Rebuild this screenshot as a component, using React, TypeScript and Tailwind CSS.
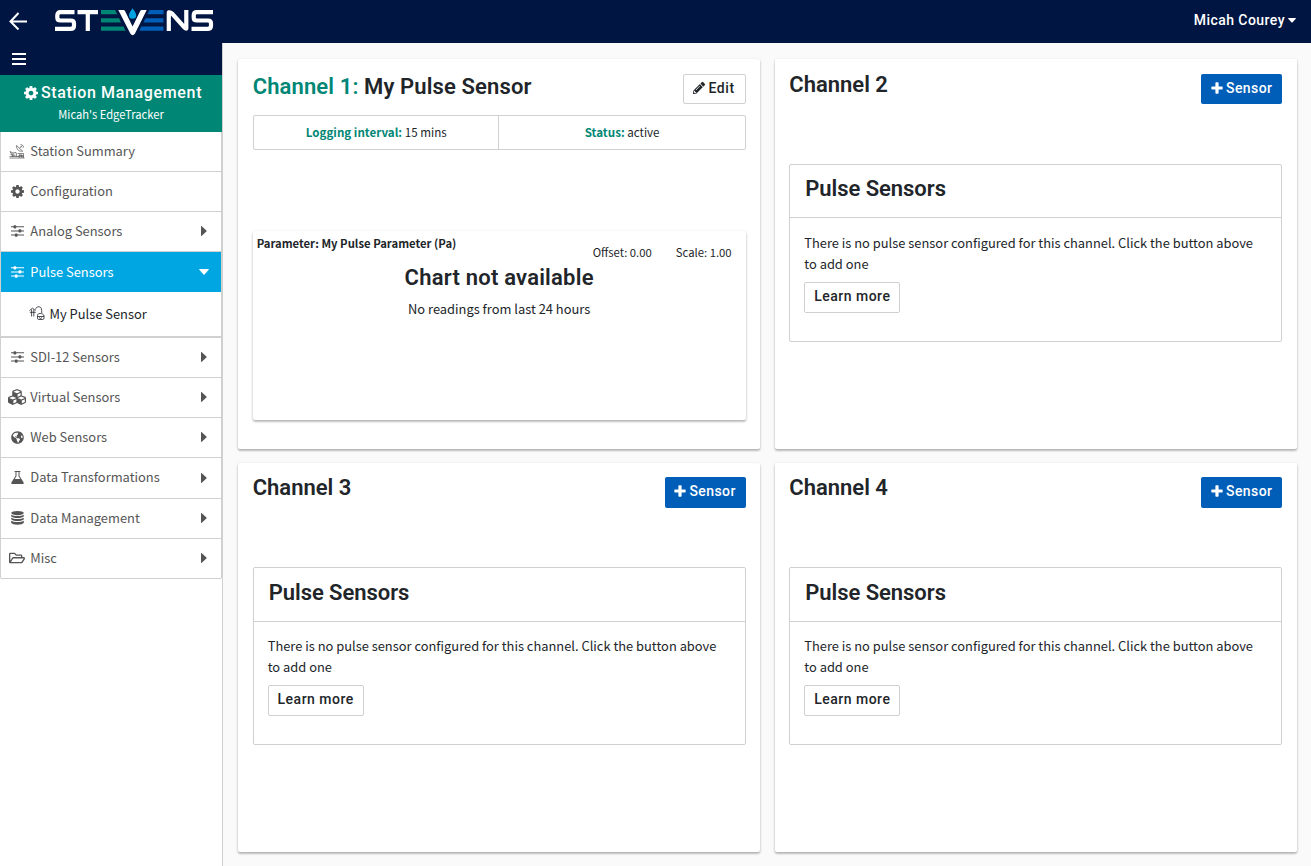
import React from 'react';
import { FaCubes, FaGlobeAmericas, FaRegFolderOpen, FaPencilAlt } from 'react-icons/fa';

const head = "font-['Roboto',sans-serif] font-medium";
const title = "font-['Roboto',sans-serif] font-semibold text-[22px]";

function Gear({ className }: { className: string }) {
  return (
    <svg viewBox="0 -128 1536 1536" fill="currentColor" className={className}>
      <path d="M1024 640q0-106-75-181t-181-75-181 75-75 181 75 181 181 75 181-75 75-181zM1536 531v222q0 12-8 23t-20 13l-185 28q-19 54-39 91 35 50 107 138 10 12 10 25t-9 23q-27 37-99 108t-94 71q-12 0-26-9l-138-108q-44 23-91 38-16 136-29 186-7 28-36 28h-222q-14 0-24.5-8.5t-11.5-21.5l-28-184q-49-16-90-37l-141 107q-10 9-25 9-14 0-25-11-126-114-165-168-7-10-7-23 0-12 8-23 15-21 51-66.5t54-70.5q-27-50-41-99l-183-27q-13-2-21-12.5t-8-23.5v-222q0-12 8-23t19-13l186-28q14-46 39-92-40-57-107-138-10-12-10-24 0-10 9-23 26-36 98.5-107.5t94.5-71.5q13 0 26 10l138 107q44-23 91-38 16-136 29-186 7-28 36-28h222q14 0 24.5 8.5t11.5 21.5l28 184q49 16 90 37l142-107q9-9 24-9 13 0 25 10 129 119 165 170 7 8 7 22 0 12-8 23-15 21-51 66.5t-54 70.5q26 50 41 98l183 28q13 2 21 12.5t8 23.5z" />
    </svg>
  );
}

function Plus() {
  return (
    <svg viewBox="0 0 12 12" className="size-3" fill="currentColor">
      <path d="M5.200.3h1.600q.8 0 .8.800V4.400h3.300q.8 0 .8.800v1.600q0 .8-.8.800H7.600v3.300q0 .8-.8.800H5.200q-.8 0-.8-.8V7.600H1.100q-.8 0-.8-.8V5.200q0-.8.800-.8h3.300V1.100q0-.8.800-.8z" />
    </svg>
  );
}

function Sliders() {
  return (
    <svg viewBox="0 0 13 12" className="w-[13px] h-3" fill="currentColor">
      <path d="M0 1.300h13v1H0zM0 5.400h13v1H0zM0 9.600h13v1H0z" />
      <rect x="2.500" y="0.200" width="2.800" height="3.200" rx="1" />
      <rect x="7.500" y="4.300" width="2.800" height="3.200" rx="1" />
      <rect x="3.800" y="8.500" width="2.800" height="3.200" rx="1" />
    </svg>
  );
}

function Flask() {
  return (
    <svg viewBox="0 0 13 13" className="size-[13px]" fill="currentColor">
      <path d="M3.600 0h5.800v1h-.9v3.900l4 6.300c.5.900.2 1.800-.9 1.800H1.400C.3 13 0 12.100.5 11.200l4-6.300V1h-.9zM5.500 1v4.200L3.700 8h5.600L7.500 5.200V1z" />
    </svg>
  );
}

function Database() {
  return (
    <svg viewBox="0 0 13 14" className="w-[13px] h-3.5" fill="currentColor">
      <ellipse cx="6.500" cy="2.100" rx="6.300" ry="2.100" />
      <path d="M.2 3.700C2.500 5.500 10.500 5.500 12.800 3.700V5.200c-1 2.400-11.600 2.400-12.600 0zM.2 6.700C2.500 8.500 10.500 8.500 12.800 6.700V8.200c-1 2.400-11.600 2.400-12.600 0zM.2 9.700c2.300 1.800 10.300 1.800 12.600 0v2.100c-1 2.600-11.600 2.600-12.600 0z" />
    </svg>
  );
}

function Station() {
  return (
    <svg viewBox="0 0 16 15" className="w-4 h-[15px]" fill="none" stroke="currentColor" strokeWidth=".7">
      <path d="M.5 14h15M.5 12.500h14M1 7.500l3 1.500 3-.5M1 7.500l3 5M4 9v4M1.500 10.500l5 1M7 8.500l1 4.500M8.500 9.500h6V14M10 14l1-4M13 14l-1-4M7.500 1.500c-.2 4 2.500 6.200 6.200 5.700zM10.500 4.500L13 1.500M11.500.7c1.800-.2 3 1 3 2.800M12 2.300l1.200 1.200M9.500 11.500h5" />
    </svg>
  );
}

function Pulse() {
  return (
    <svg viewBox="0 0 16 15" className="w-4 h-[15px]" fill="none" stroke="currentColor" strokeWidth=".8">
      <path d="M.5 4.500L3.500 2.200l3 2.300M.8 6.300h6M2.600 3.500v7M4.800 3.500v7M6.500 3.500C7-.2 12.700-.5 12.700 4.500V7" />
      <path d="M8.500 9.500c0-1.300 1-2 2.700-2s3.800.8 3.800 2.500v2.200c0 .8-.5 1.300-1.300 1.300h-4c-.8 0-1.200-.5-1.200-1.300zM8.500 10.500h6.500M10 11.500l1.500 1 1.500-1" />
    </svg>
  );
}

function Caret({ className, down }: { className?: string; down?: boolean }) {
  return down ? (
    <svg viewBox="0 0 10 6" className={className} fill="currentColor"><path d="M.6 0h8.800q.8.100.3.800L5.500 5.400q-.5.500-1 0L.3.800Q-.2.100.6 0z" /></svg>
  ) : (
    <svg viewBox="0 0 6 10" className={className} fill="currentColor"><path d="M0 .6v8.800q.1.800.8.300L5.400 5.500q.5-.5 0-1L.8.300Q-.1-.2 0 .6z" /></svg>
  );
}

function Logo() {
  return (
    <svg viewBox="0 0 160 28" className="h-7 w-40" fill="none">
      <g stroke="#fff" strokeWidth="4.200" strokeLinejoin="round">
        <path d="M19.500 4.200H5.500Q2.300 4.200 2.300 7.400V9.400Q2.300 12.500 5.500 12.500H16Q19 12.500 19 15.500V17.700Q19 20.900 15.500 20.900H0" />
        <path d="M22.500 4.200H43M32.800 4.200V23" />
        <path d="M113.800 23V4.400Q115.500 4 117 5.500L129.500 19.500Q131 21 131.300 20.500V2" />
        <path d="M158 4.200H142Q138.700 4.200 138.700 7.400V9.400Q138.700 12.500 142 12.500H153Q156 12.500 156 15.500V17.700Q156 20.900 152.500 20.900H136.500" />
      </g>
      <path fill="#008675" d="M46 2.100h14l2.200 4.200H46zM46 10.200h18l2 4.200H46zM46 18.500h22.500l2 4.300H46z" />
      <path fill="#005eb8" d="M94.500 2.100h14v4.200H92.300zM90.500 10.200h18v4.200H88.500zM86.300 18.500h22.200v4.300H84.300z" />
      <path fill="#fff" d="M63.300 2.100h5.200q1 0 1.500 1L77.600 18.500 85.200 3q.5-1 1.500-1h5L80 25.500q-2.300 3.500-4.700 0z" />
      <path fill="#001541" d="M77.600-1.500c2 2.500 4.700 5.500 4.700 8.600a4.700 4.700 0 0 1-9.400 0c0-3 2.700-6 4.700-8.600z" />
      <path fill="#00a3e0" d="M77.600.2c1.500 2.500 3.600 4.500 3.600 7a3.600 3.600 0 0 1-7.200 0c0-2.500 2.100-4.500 3.600-7z" />
    </svg>
  );
}

interface Item { label: string; icon: React.ReactNode; arrow?: boolean; h: string }

const top: Item[] = [
  { label: 'Station Summary', icon: <Station />, h: 'h-10' },
  { label: 'Configuration', icon: <Gear className="size-[13px]" />, h: 'h-10' },
  { label: 'Analog Sensors', icon: <Sliders />, arrow: true, h: 'h-10' },
];
const rest: Item[] = [
  { label: 'SDI-12 Sensors', icon: <Sliders />, arrow: true, h: 'h-10' },
  { label: 'Virtual Sensors', icon: <FaCubes className="size-[18px] shrink-0" />, arrow: true, h: 'h-10' },
  { label: 'Web Sensors', icon: <FaGlobeAmericas className="size-[13px]" />, arrow: true, h: 'h-10' },
  { label: 'Data Transformations', icon: <Flask />, arrow: true, h: 'h-[41px]' },
  { label: 'Data Management', icon: <Database />, arrow: true, h: 'h-10' },
  { label: 'Misc', icon: <FaRegFolderOpen className="size-4" />, arrow: true, h: 'h-10' },
];

function Row({ item }: { item: Item }) {
  return (
    <div className={`flex items-center border-b border-[#d0d0d0] pl-1.5 pr-3.5 text-[#555] ${item.h}`}>
      <span className="flex w-5 shrink-0 justify-center pb-px">{item.icon}</span>
      <span className="ml-[3.3px] flex-1 pb-0.5 text-[12.9px]">{item.label}</span>
      {item.arrow && <Caret className="mb-px h-2.5 w-1.5" />}
    </div>
  );
}

function SensorButton({ lower }: { lower?: boolean }) {
  return (
    <button className={`flex w-[81px] items-center justify-center gap-[3px] rounded-xs bg-[#005eb8] text-white ${lower ? 'h-[31px] pb-[3px]' : 'h-[30px] pb-0.5'} ${head} text-[14px] tracking-[0.4px]`}>
      <Plus />
      <span>Sensor</span>
    </button>
  );
}

const card = 'rounded-xs bg-white shadow-[0_1px_3px_rgba(0,0,0,0.2),0_2px_2px_rgba(0,0,0,0.16)]';

function EmptyChannel({ n, lower }: { n: number; lower?: boolean }) {
  return (
    <section className={`${card} px-[14.7px] ${lower ? 'pt-3.5' : 'pt-[15px]'}`}>
      <div className="flex h-[90px] items-start justify-between">
        <h2 className={`${title} leading-[22px]`}>Channel {n}</h2>
        <SensorButton lower={lower} />
      </div>
      <div className="h-[178px] rounded-xs border border-[#d0d0d0]">
        <div className={`flex items-center border-b border-[#d0d0d0] px-[15px] ${lower ? 'h-[54px] pb-1' : 'h-[53px] pb-1.5'}`}>
          <h3 className={`${title} tracking-[-0.05px]`}>Pulse Sensors</h3>
        </div>
        <div className={`px-3.5 ${lower ? 'pt-[13px]' : 'pt-3.5'}`}>
          <p className="text-[12.88px] leading-[21px]">There is no pulse sensor configured for this channel. Click the button above<br />to add one</p>
          <button className={`mt-2 flex h-[31px] w-24 items-center justify-center rounded-xs border border-[#d0d0d0] pb-0.5 ${head} text-[14px] tracking-[0.5px]`}>Learn more</button>
        </div>
      </div>
    </section>
  );
}

export default function App() {
  return (
    <div className="flex h-[866px] w-[1311px] flex-col overflow-hidden bg-[#fafafa] font-['Noto_Sans_CJK_SC','Noto_Sans',sans-serif] text-[#212529]">
      <header className="flex h-[43px] shrink-0 items-start bg-[#001541] pl-[9px] pr-[15px] text-white">
        <svg viewBox="0 0 18 18" className="mt-3 size-[18px]" fill="none" stroke="currentColor" strokeWidth="2"><path d="M18 9.500H1.500M9.500 1L1.500 9.500l8 8" /></svg>
        <div className="ml-7 mt-2"><Logo /></div>
        <div className={`ml-auto mt-2.5 flex items-center gap-[3px] ${head} text-[14px] leading-5 tracking-[0.45px]`}>
          <span>Micah Courey</span>
          <Caret down className="h-[5px] w-2" />
        </div>
      </header>
      <div className="flex min-h-0 flex-1">
        <aside className="w-[223px] shrink-0 border-r border-[#d0d0d0] bg-white">
          <div className="flex h-8 items-center bg-[#001541] pl-3 text-white">
            <svg viewBox="0 0 14 12" className="h-3 w-3.5" fill="currentColor"><path d="M0 0h14v2H0zM0 5h14v2H0zM0 10h14v2H0z" /></svg>
          </div>
          <div className="flex h-[57px] flex-col items-center bg-[#008675] pt-2 text-white">
            <div className={`ml-1 flex items-center gap-[3px] ${head} text-[16px] leading-5 tracking-[0.65px]`}>
              <Gear className="size-3.5" />
              <span>Station Management</span>
            </div>
            <div className="mt-0.5 text-[11.2px] leading-[18px]">Micah's EdgeTracker</div>
          </div>
          <nav className="rounded-b-xs border-x border-[#d0d0d0]">
            {top.map((item) => <Row key={item.label} item={item} />)}
            <div className="flex h-10 items-center bg-[#00a6e2] pl-1.5 pr-3 text-white">
              <span className="flex w-5 justify-center"><Sliders /></span>
              <span className="ml-[3.3px] flex-1 text-[12.9px]">Pulse Sensors</span>
              <Caret down className="h-1.5 w-2.5" />
            </div>
            <div className="flex h-[46px] items-center border-b-2 border-[#d0d0d0] pl-7">
              <span className="pb-0.5"><Pulse /></span>
              <span className="ml-[4.500px] text-[12.9px]">My Pulse Sensor</span>
            </div>
            {rest.map((item) => <Row key={item.label} item={item} />)}
          </nav>
        </aside>
        <main className="grid flex-1 grid-cols-[522.3px_522.3px] grid-rows-[390px_389px] gap-x-[14.3px] gap-y-3.5 pl-[15px] pt-4">
          <section className={`${card} px-[14.7px] pt-[15px]`}>
            <div className="flex h-[41px] items-start justify-between">
              <h2 className={`${title} mt-0.5 leading-[22px] tracking-[0.12px]`}><span className="text-[#008675]">Channel 1:</span> My Pulse Sensor</h2>
              <button className={`flex h-[30px] w-[63px] items-center justify-center gap-[3px] rounded-xs border border-[#d0d0d0] pb-0.5 ${head} text-[14px] tracking-[0.6px]`}>
                <FaPencilAlt className="size-3" />
                <span>Edit</span>
              </button>
            </div>
            <div className="grid h-[35px] grid-cols-[245px_1fr] rounded-xs border border-[#d0d0d0] text-center text-[11.6px] leading-[32px]">
              <div className="border-r border-[#d0d0d0] pl-px"><b className="text-[#008675]">Logging interval:</b> 15 mins</div>
              <div className="pl-px"><b className="text-[#008675]">Status:</b> active</div>
            </div>
            <div className={`${card} mt-[81px] h-[189px] px-1 pt-[3px]`}>
              <div className="flex h-[31px] justify-between text-[11.3px] leading-[18px]">
                <b>Parameter: My Pulse Parameter (Pa)</b>
                <div className="mr-2.5 mt-[9px] flex gap-6"><span>Offset: 0.00</span><span>Scale: 1.00</span></div>
              </div>
              <div className="text-center">
                <h3 className={`${title} leading-[26px] tracking-[0.22px]`}>Chart not available</h3>
                <p className="mt-[7px] text-[12.88px] leading-[21px]">No readings from last 24 hours</p>
              </div>
            </div>
          </section>
          <EmptyChannel n={2} />
          <EmptyChannel n={3} lower />
          <EmptyChannel n={4} lower />
        </main>
      </div>
    </div>
  );
}
